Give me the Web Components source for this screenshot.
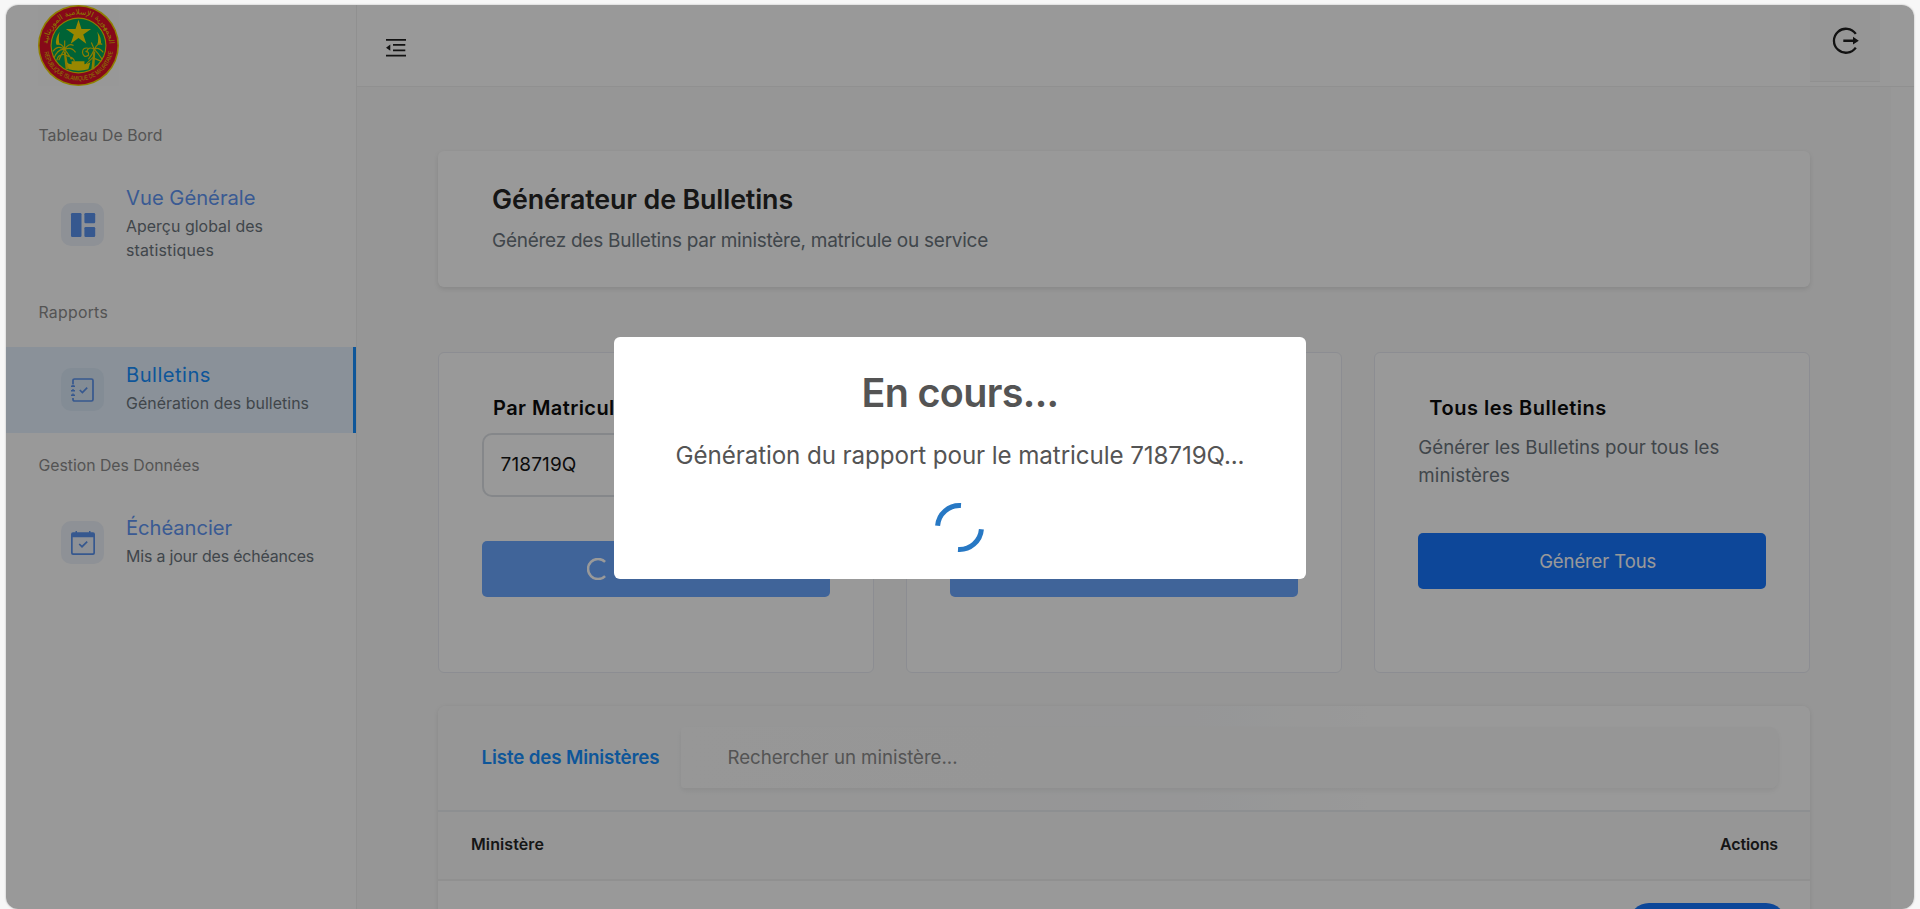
<!DOCTYPE html>
<html lang="fr">
<head>
<meta charset="utf-8">
<title>Générateur de Bulletins</title>
<style>
html,body{margin:0;height:909px;overflow:hidden;background:#f7f7f7;font-family:Inter,"Open Sans",sans-serif}
</style>
</head>
<body>
<bulletin-app></bulletin-app>
<script>
/* prepare runs on the cloned markup before it is attached, ready runs after */
const define=(name,html,{prepare,ready}={})=>customElements.define(name,class extends HTMLElement{
  connectedCallback(){
    if(this.shadowRoot)return;
    const t=document.createElement('template');
    t.innerHTML=html;
    const content=t.content.cloneNode(true);
    if(prepare)prepare(this,content);
    this.attachShadow({mode:'open'}).append(content);
    if(ready)ready(this);
  }
});

/* A single line of text tracked to a given width */
define('fit-text',`<style>:host{display:inline-block;white-space:nowrap;flex:none}</style><slot></slot>`,{ready(el){
  const w=+el.getAttribute('w'),n=el.textContent.length;
  const natural=el.getBoundingClientRect().width;
  if(w&&natural)el.style.letterSpacing=((w-natural)/n).toFixed(3)+'px';
}});

const icons={
  grid:'<rect x="0" y="0" width="10.5" height="24" rx="1.2"/><rect x="13.4" y="0" width="10.8" height="10.3" rx="1.2"/><rect x="13.4" y="14" width="10.8" height="10" rx="1.2"/>',
  book:'<path d="M2 6V2.6Q2 1 3.6 1H20.4Q22 1 22 2.6V21.4Q22 23 20.4 23H3.6Q2 23 2 21.4V20" fill="none" stroke="currentColor" stroke-width="1.7"/><path d="M0 7.5H1.3V6.5H2.7V7.5H4V9H0ZM0 12H1.3V11H2.7V12H4V13.5H0ZM0 16.5H1.3V15.5H2.7V16.5H4V18H0Z"/><path d="M8.8 12l2.6 2.6 4.8-5" fill="none" stroke="currentColor" stroke-width="1.7"/>',
  calendar:'<path d="M2 1.2H4.5V0H6V1.2H18V0H19.5V1.2H22Q24 1.2 24 3.2V22Q24 24 22 24H2Q0 24 0 22V3.2Q0 1.2 2 1.2ZM1.7 6.2V21.6Q1.7 22.3 2.4 22.3H21.6Q22.3 22.3 22.3 21.6V6.2Z" fill-rule="evenodd"/><path d="M8.2 13l2.8 2.7 5.2-5" fill="none" stroke="currentColor" stroke-width="1.7"/>'
};
define('menu-icon',`<style>
:host{display:flex;align-items:center;justify-content:center;width:43px;height:43px;border-radius:10px;background:var(--tile,#edf2fa);color:#5b93ee;flex:none}
svg{display:block;overflow:visible}</style><svg width="24" height="24" viewBox="0 0 24 24" fill="currentColor"></svg>`,{prepare(el,c){
  c.querySelector('svg').innerHTML=icons[el.getAttribute('name')];
}});

define('menu-item',`<style>
:host{display:flex;align-items:center;height:86px;padding:0 0 1px 55px;gap:22px;box-sizing:border-box;color:#6297f5}
:host([tall]){height:110px}
:host([active]){background:#e6f2ff;border-right:3px solid #1890ff;color:#1890ff;--tile:#dbe9f8}
.text{display:flex;flex-direction:column;padding-bottom:4px}
.title{font-size:20.2px;line-height:32px;height:33px}
.sub{font-size:15.9px;line-height:24px;color:#6c757d;display:flex;flex-direction:column;align-items:flex-start}
</style><menu-icon></menu-icon><div class="text"><div class="title"><slot name="title"></slot></div><div class="sub"><slot></slot></div></div>`,{prepare(el,c){
  c.querySelector('menu-icon').setAttribute('name',el.getAttribute('icon'));
}});

define('menu-label',`<style>:host{display:flex;align-items:center;height:67px;box-sizing:border-box;padding:0 0 2px 32.5px;font-size:15.8px;color:#8c8c8c}</style><slot></slot>`);

define('state-seal',`<style>:host{display:block;width:82px;height:82px}svg{display:block}</style>
<svg width="81" height="81" viewBox="0 0 82 82">
<defs><path id="lower" d="M5.500 41A35.500 35.500 0 0 0 76.500 41"/><path id="upper" d="M10.500 46A31 31 0 1 1 71.500 46"/></defs>
<rect width="82" height="82" fill="#fdfdfd"/>
<circle cx="41" cy="41" r="41" fill="#efd400"/><circle cx="41" cy="41" r="39.400" fill="#df1029"/>
<circle cx="41" cy="41" r="28.300" fill="#efd400"/><circle cx="41" cy="41" r="27.200" fill="#00a55a"/>
<path d="M22 27Q17 34 18.500 40L22 40Q20 34 22 27ZM60 27Q65 34 63.500 40L60 40Q62 34 60 27Z" fill="#ffe100"/>
<path d="M41 15l3 9.200h9.800l-8 5.700 3.100 9.400-7.900-5.800-7.900 5.800 3.100-9.400-8-5.700h9.800z" fill="#ffe100"/>
<path d="M26 47l2 18h3L28 47zM56 47l-2 18h3l1-18z" fill="#e8cf00"/>
<path d="M27 45Q20 40 15 47M27 45Q20 44 16 54M27 45Q24 49 21 56M27 45Q30 49 34 55M27 45Q34 42 38 48M27 45Q31 38 36 41M27 45Q24 38 19 40M27 45L27 36M57 45Q51 41 49 48M57 45Q55 50 51 55M57 45Q61 42 66 48M57 45Q61 49 65 55M57 45L54 38M57 45Q61 37 65 40M57 52Q52 56 45 64M57 54Q62 56 64 57M52 44Q45 42 45 48Q46 54 51 51Q52 47 48 47M27 50Q20 50 19 56M28 51Q36 53 37 57" fill="none" stroke="#e8cf00" stroke-width="1.200"/>
<path d="M29 58Q31 60 34 60V57H47V60Q50 60 53 58L51 65Q41 68 31 65Z" fill="#ffe100"/>
<text font-family="Liberation Sans,sans-serif" font-size="6.600" fill="#e8cf00"><textPath href="#lower" startOffset="7" textLength="98" lengthAdjust="spacingAndGlyphs">REPUBLIQUE ISLAMIQUE DE MAURITANIE</textPath></text>
<text font-family="DejaVu Sans,sans-serif" font-size="7.600" fill="#e8cf00" text-anchor="middle" direction="rtl"><textPath href="#upper" startOffset="50%">الجمهورية الإسلامية الموريتانية</textPath></text>
</svg>`);

define('side-bar',`<style>
:host{display:flex;flex-direction:column;width:350px;background:#fff;border-right:1px solid #f0f0f0;flex:none}
state-seal{margin:0 0 16px 32px}
</style>
<state-seal></state-seal>
<menu-label><fit-text w="124">Tableau De Bord</fit-text></menu-label>
<menu-item icon="grid" tall><fit-text slot="title" w="129.500">Vue Générale</fit-text><fit-text w="137">Aperçu global des</fit-text><fit-text w="88">statistiques</fit-text></menu-item>
<menu-label><fit-text w="69.500">Rapports</fit-text></menu-label>
<menu-item icon="book" active><fit-text slot="title" w="85">Bulletins</fit-text><fit-text w="183">Génération des bulletins</fit-text></menu-item>
<menu-label><fit-text w="161">Gestion Des Données</fit-text></menu-label>
<menu-item icon="calendar"><fit-text slot="title" w="106">Échéancier</fit-text><fit-text w="188">Mis a jour des échéances</fit-text></menu-item>`);

define('top-bar',`<style>
:host{display:flex;justify-content:space-between;height:81px;background:#fff;border-bottom:1px solid #f0f0f0;padding:0 34px 0 29px;flex:none}
.fold{display:block;margin-top:34px}
.exit{width:70px;height:77px;box-sizing:border-box;background:#fafafa;border-bottom:1px solid #f0f0f0;display:flex;justify-content:center;padding-top:22px}
svg{display:block}
</style>
<svg class="fold" width="20" height="18" viewBox="0 0 20 18" fill="#1f1f1f"><path d="M0 0H20V1.800H0ZM7 5H19.300V6.800H7ZM7 10.500H19.300V12.300H7ZM0 15.700H20V17.500H0ZM0 8.700L4.300 5.600V11.800Z"/></svg>
<div class="exit"><svg width="28" height="28" viewBox="0 0 28 28"><path d="M24.800 6.900A12 12 0 1 0 24.800 20.600" fill="none" stroke="#1f1f1f" stroke-width="2.300"/><path d="M12.300 12.500H22V9.800L27.800 13.800 22 17.600V15H12.300Z" fill="#1f1f1f"/></svg></div>`);

define('hero-card',`<style>
:host{display:flex;flex-direction:column;align-items:flex-start;height:136px;box-sizing:border-box;padding:30px 0 0 54px;background:#fff;border-radius:6px;box-shadow:0 2px 5px rgba(0,0,0,.1)}
h1{margin:0;font-size:26.800px;font-weight:560;line-height:36px;color:#262626}
p{margin:9px 0 0;font-size:19px;line-height:30px;color:#6c757d}
</style><h1><fit-text w="301">Générateur de Bulletins</fit-text></h1><p><fit-text w="496">Générez des Bulletins par ministère, matricule ou service</fit-text></p>`);

define('action-button',`<style>
:host{display:flex;align-items:center;justify-content:center;height:56px;border-radius:5px;background:#1677ff;color:#fff;font-size:18.500px;box-sizing:border-box}
:host([disabled]){background:#6ca7ff}
:host([busy]){justify-content:flex-start;padding-left:105px}
</style><slot></slot>`);

define('report-card',`<style>
:host{display:flex;flex-direction:column;flex:1;height:321px;box-sizing:border-box;padding:38px 43px 0;border:1px solid #eaecf3;border-radius:6px;background:#fff}
h2{margin:0 0 0 11px;font-size:20px;line-height:34px;height:34px;font-weight:560;color:#0c0c0c}
</style><h2><slot name="title"></slot></h2><slot></slot>`);

define('matricule-field',`<style>
:host{display:flex;align-items:center;height:64px;margin-top:8px;margin-bottom:44px;box-sizing:border-box;border:2px solid #dee2e6;border-radius:10px;padding:0 0 1px 16.500px;font-size:19px;color:#141414}
</style><slot></slot>`);

define('button-spinner',`<style>:host{display:block}svg{display:block}</style><svg width="22" height="22" viewBox="0 0 22 22"><path d="M18.100 3.900A10 10 0 1 0 18.100 18.100" fill="none" stroke="#fff" stroke-width="2.500"/></svg>`);

define('card-note',`<style>:host{display:flex;flex-direction:column;align-items:flex-start;font-size:18.700px;line-height:28px;color:#6c757d;margin:9px 0 43px;height:56px}</style><slot></slot>`);

define('ministry-list',`<style>
:host{display:flex;flex-direction:column;height:260px;background:#fff;border-radius:8px;box-shadow:0 1px 5px rgba(0,0,0,.09);overflow:hidden}
.head{display:flex;align-items:center;height:106px;padding:0 32px 2px 43.500px;box-sizing:border-box;border-bottom:2px solid #ebeef2;background:linear-gradient(90deg,#fafafa,#fafbfc 55%,#fff 68%)}
.head b{width:199px;font-weight:560;font-size:18.800px;color:#1890ff;flex:none}
.search{flex:1;height:61px;display:flex;align-items:center;padding-left:47px;box-sizing:border-box;font-size:18.700px;color:#8c8c8c;border-radius:4px 8px 8px 4px;background:linear-gradient(90deg,#fcfcfc,#fafafa 60%);box-shadow:0 3px 5px rgba(0,0,0,.06)}
.cols{display:flex;justify-content:space-between;align-items:center;height:69px;box-sizing:border-box;padding:0 32px 4px 33px;border-bottom:2px solid #f0f0f0;background:#fafafa;color:#262626;font-size:16px;font-weight:600}
.row{display:flex;justify-content:flex-end;padding:22px 24px 0 0}
.pill{width:157px;height:40px;border-radius:20px;background:#1677ff}
</style>
<div class="head"><b><fit-text w="178">Liste des Ministères</fit-text></b><div class="search"><fit-text w="230">Rechercher un ministère...</fit-text></div></div>
<div class="cols"><fit-text w="73">Ministère</fit-text><fit-text w="58">Actions</fit-text></div>
<div class="row"><div class="pill"></div></div>`);

define('page-content',`<style>
:host{display:flex;flex-direction:column;flex:1;min-height:0;background:#fafafa;border-right:23px solid #fdfdfd;padding:64px 81px 0;overflow:hidden}
.cards{display:flex;gap:32.500px;margin:65px 0 33px;flex:none}
hero-card,ministry-list{flex:none}
</style>
<hero-card></hero-card>
<div class="cards">
<report-card><fit-text slot="title" w="134">Par Matricule</fit-text><matricule-field><fit-text w="76">718719Q</fit-text></matricule-field><action-button disabled busy><button-spinner></button-spinner></action-button></report-card>
<report-card><matricule-field></matricule-field><action-button disabled></action-button></report-card>
<report-card><fit-text slot="title" w="177.500">Tous les Bulletins</fit-text><card-note><fit-text w="301">Générer les Bulletins pour tous les</fit-text><fit-text w="91.500">ministères</fit-text></card-note><action-button><fit-text w="117" style="margin-left:11px">Générer Tous</fit-text></action-button></report-card>
</div>
<ministry-list></ministry-list>`);

define('progress-dialog',`<style>
:host{display:flex;flex-direction:column;align-items:center;width:692px;height:242px;box-sizing:border-box;border-radius:6px;background:#fff;color:#545454}
h2{margin:31px 0 0;font-size:39.500px;line-height:50px;font-weight:580}
p{margin:23px 0 0;font-size:24.200px;line-height:30px}
svg{display:block;margin:32px 1px 0 0}
</style>
<h2><fit-text w="197">En cours...</fit-text></h2>
<p><fit-text w="569">Génération du rapport pour le matricule 718719Q...</fit-text></p>
<svg width="49" height="49" viewBox="0 0 49 49" fill="none" stroke="#2778c4" stroke-width="5"><path d="M2.600 22.800A22 22 0 0 1 26 2.600M46.400 26.200A22 22 0 0 1 23 46.400"/></svg>`);

define('bulletin-app',`<style>
:host{display:block;height:909px;box-sizing:border-box;padding:5px 6px 0}
.frame{position:relative;display:flex;height:904px;border-radius:12px;overflow:hidden;box-shadow:0 0 2px rgba(0,0,0,.3)}
.main{display:flex;flex-direction:column;flex:1;min-width:0}
.veil{position:absolute;inset:0;background:rgba(0,0,0,.4);display:flex;justify-content:center;align-items:flex-start;padding-top:332px}
</style>
<div class="frame"><side-bar></side-bar><div class="main"><top-bar></top-bar><page-content></page-content></div>
<div class="veil"><progress-dialog></progress-dialog></div></div>`);
</script>
</body>
</html>
